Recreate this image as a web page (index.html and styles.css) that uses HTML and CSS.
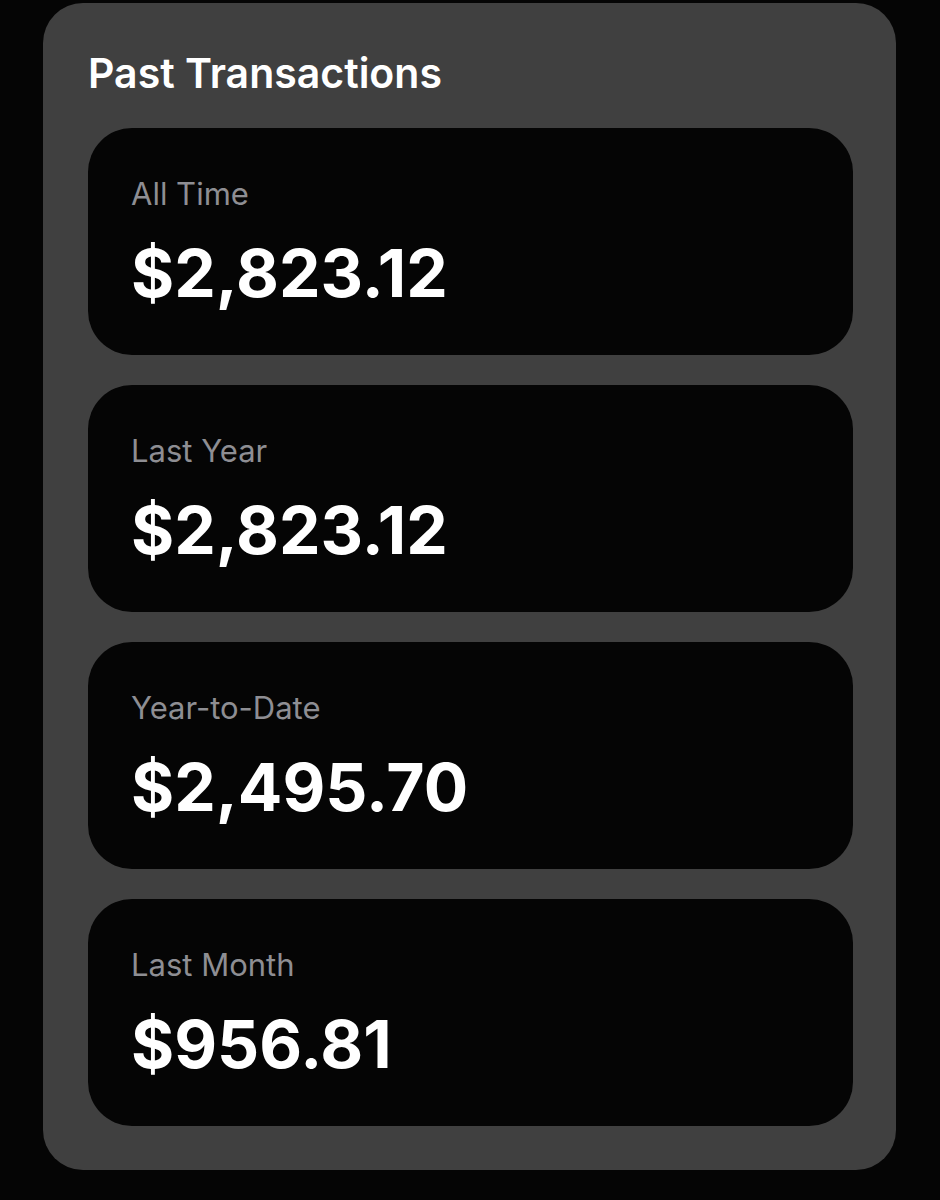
FILE: index.html
```html
<!DOCTYPE html>
<html>
<head>
<title>Past Transactions</title>
<link rel="stylesheet" href="styles.css">
</head>
<body>

<div class="panel">
  <h1 class="panel-title">Past Transactions</h1>

  <div class="totals">
    <div class="total-card">
      <div class="total-label">All Time</div>
      <div class="total-amount">$2,823.12</div>
    </div>
    <div class="total-card">
      <div class="total-label">Last Year</div>
      <div class="total-amount">$2,823.12</div>
    </div>
    <div class="total-card">
      <div class="total-label">Year-to-Date</div>
      <div class="total-amount">$2,495.70</div>
    </div>
    <div class="total-card">
      <div class="total-label">Last Month</div>
      <div class="total-amount">$956.81</div>
    </div>
  </div>
</div>

</body>
</html>
```

FILE: styles.css
```css
body { margin: 0; background-color: #050505; color: #fff; font-family: Inter, 'Noto Sans', sans-serif; }

.panel {
  box-sizing: border-box;
  width: 853px;
  margin: 3px 0 0 43px;
  padding: 45px 43px 44px 45px;
  background-color: #404040;
  border-radius: 40px;
}
.panel-title { margin: 0 0 30px; font-size: 41px; line-height: 50px; font-weight: 600; }

.totals { display: flex; flex-direction: column; gap: 30px; }

/* one black tile per period */
.total-card {
  box-sizing: border-box;
  height: 227px;
  padding: 47px 43px 0;
  background-color: #050505;
  border-radius: 44px;
}
.total-label { font-size: 31px; line-height: 37px; color: #8e8e93; }
.total-amount { margin-top: 22px; font-size: 66px; line-height: 79px; font-weight: 700; }
```
